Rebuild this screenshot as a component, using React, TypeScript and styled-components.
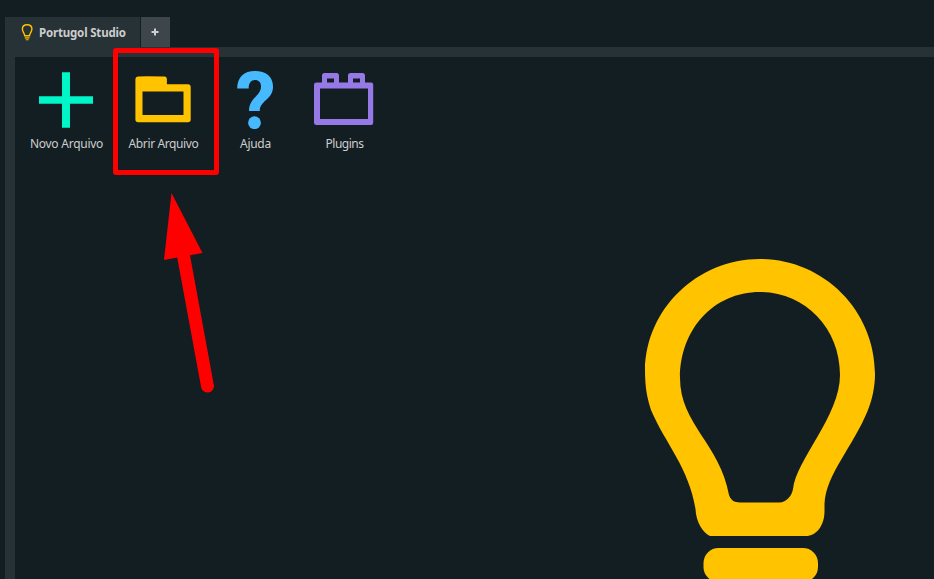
import React from "react";
import styled, { createGlobalStyle } from "styled-components";

const GlobalStyle = createGlobalStyle`
  html, body { margin: 0; height: 100%; overflow: hidden; background: #131e23; }
  * { box-sizing: border-box; }
  svg { display: block; }
`;

const Window = styled.div`
  position: relative;
  display: flex;
  flex-direction: column;
  height: 579px;
  padding: 17px 0 0 5px;
  background: #131e23;
  color: #cdcdcd;
  font-family: "Noto Sans", "Open Sans", sans-serif;
  overflow: hidden;
`;

const TabBar = styled.div`
  display: flex;
  gap: 1px;
  height: 30px;
  flex: none;
`;

const Tab = styled.div`
  display: flex;
  align-items: center;
  width: 135px;
  padding-left: 16px;
  gap: 6px;
  background: #273237;
`;

const TabTitle = styled.span`
  font-size: 11.5px;
  font-weight: 700;
  line-height: 16px;
  letter-spacing: -0.18px;
  white-space: nowrap;
  padding-top: 2px;
`;

const AddTab = styled.div`
  display: flex;
  align-items: center;
  justify-content: center;
  width: 29px;
  padding-right: 1px;
  background: #3d464b;
`;

const Frame = styled.div`
  display: flex;
  flex: 1;
  min-height: 0;
  border-top: 10px solid #273237;
  border-left: 10px solid #273237;
`;

const Workspace = styled.main`
  position: relative;
  flex: 1;
  background: #131e23;
`;

const Toolbar = styled.div`
  display: flex;
  padding-top: 12px;
  padding-left: 10px;
`;

const Action = styled.div<{ $width: number }>`
  display: flex;
  flex-direction: column;
  align-items: center;
  width: ${(p) => p.$width}px;
`;

const Label = styled.span<{ $tracking: number }>`
  margin-top: 7px;
  padding-left: 1px;
  font-size: 12px;
  line-height: 16px;
  letter-spacing: ${(p) => p.$tracking}px;
  white-space: nowrap;
`;

const Lamp = styled.svg`
  position: absolute;
  left: 625px;
  top: 198px;
`;

const Highlight = styled.div`
  position: absolute;
  left: 113px;
  top: 48px;
  width: 106px;
  height: 127px;
  border: 5px solid #ff0000;
  border-radius: 3px;
`;

const Pointer = styled.svg`
  position: absolute;
  left: 160px;
  top: 190px;
`;

const SmallLamp = () => (
  <svg width="12" height="18" viewBox="0 0 12 18" fill="none" stroke="#ffc300">
    <path d="M3.7 12.8C3.5 10 1.4 9 1.4 6.1C1.4 3.1 3.4 1.7 6.1 1.7S10.9 3.1 10.9 6.1C10.9 9 8.7 10 8.5 12.8Z" strokeWidth="1.4" />
    <path d="M3.8 14.9h4.7M4.8 16.7h2.8" strokeWidth="1.1" />
  </svg>
);

const PlusMark = () => (
  <svg width="8" height="8" viewBox="0 0 8 8" fill="#cdcdcd">
    <path d="M3 .5h2V3h2.500v2H5v2.500H3V5H.5V3H3z" />
  </svg>
);

const NewIcon = () => (
  <svg width="60" height="60" viewBox="0 0 60 60" fill="#00f5c8">
    <path d="M26 3.200h8v24h23v7.600H34v23.900h-8V34.800H3v-7.600h23z" />
  </svg>
);

const FolderIcon = () => (
  <svg width="60" height="60" viewBox="0 0 60 60" fill="#ffc300">
    <path fillRule="evenodd" d="M5.400 7.500q3-.3 26 0 2.500 0 2.500 3v4.700H55q2.700 0 2.700 3v32.300q0 2.800-2.700 2.800H5.200q-2.800 0-2.800-2.800V10.500q0-3 3-3zM9.500 22.500v23.500h41V22.500z" />
  </svg>
);

const HelpIcon = () => (
  <svg width="60" height="60" viewBox="0 0 60 60" fill="#46b9ff">
    <path d="M12.200 19.500C12.200 8 19 2 30 2C41 2 48 7.700 48 17.500C48 31 35 31 34.800 42H24C24 29 36 27 36 17.500C36 13.300 33.700 11 30 11C26 11 23.700 14 23.700 19.500Z" />
    <circle cx="29.500" cy="53.700" r="6.400" />
  </svg>
);

const PluginIcon = () => (
  <svg width="60" height="60" viewBox="0 0 60 60" fill="#9678e6">
    <path fillRule="evenodd" d="M2.500 13.500H8V6.500q0-2.500 2.500-2.500h12q2.500 0 2.500 2.500v7h9V6.500q0-2.500 2.500-2.500h12q2.500 0 2.500 2.500v7h6q2.200 0 2.200 2v38.300q0 2.200-2.200 2.200H2.500q-2.500 0-2.500-2.200V15.500q0-2 2.500-2zM13 9.500v4h7v-4zM39 9.500v4h7v-4zM6 19.500v30.500h48V19.500z" />
  </svg>
);

const actions = [
  { label: "Novo Arquivo", width: 82, tracking: -0.25, Icon: NewIcon },
  { label: "Abrir Arquivo", width: 112, tracking: -0.38, Icon: FolderIcon },
  { label: "Ajuda", width: 72, tracking: -0.3, Icon: HelpIcon },
  { label: "Plugins", width: 106, tracking: -0.5, Icon: PluginIcon },
];

export default function App() {
  return (
    <>
      <GlobalStyle />
      <Window>
        <TabBar>
          <Tab>
            <SmallLamp />
            <TabTitle>Portugol Studio</TabTitle>
          </Tab>
          <AddTab><PlusMark /></AddTab>
        </TabBar>
        <Frame>
          <Workspace>
            <Toolbar>
              {actions.map(({ label, width, tracking, Icon }) => (
                <Action key={label} $width={width}>
                  <Icon />
                  <Label $tracking={tracking}>{label}</Label>
                </Action>
              ))}
            </Toolbar>
            <Lamp width="240" height="324" viewBox="640 255 240 324" fill="#ffc300">
              <path fillRule="evenodd" d="M760 259C823 259 875 310 875 374C875 387 872 400 868 410C853 447 826 474 824.500 504V511C824.500 526 816 536 806 536H710C703 533 696 522 695.500 509C689 468 665 443 651 410C647 398 645 387 645 370C646 309 697 259 760 259ZM760 292C713 292 680 330 680 378C680 424 720 444 729 495Q731 502.500 740 502.500H779C787 502.500 792 495 793 489C796 460 840 416 840 375C840 327 804 292 760 292Z" />
              <rect x="703.500" y="548" width="114.500" height="34" rx="15" />
            </Lamp>
          </Workspace>
        </Frame>
        <Highlight />
        <Pointer width="60" height="210" viewBox="160 190 60 210" fill="#ff0000">
          <path d="M171.500 193L202.500 253L190 255.200L214 386A6.500 6.500 0 0 1 201.300 388L177.200 257.500L164 260Z" />
        </Pointer>
      </Window>
    </>
  );
}
